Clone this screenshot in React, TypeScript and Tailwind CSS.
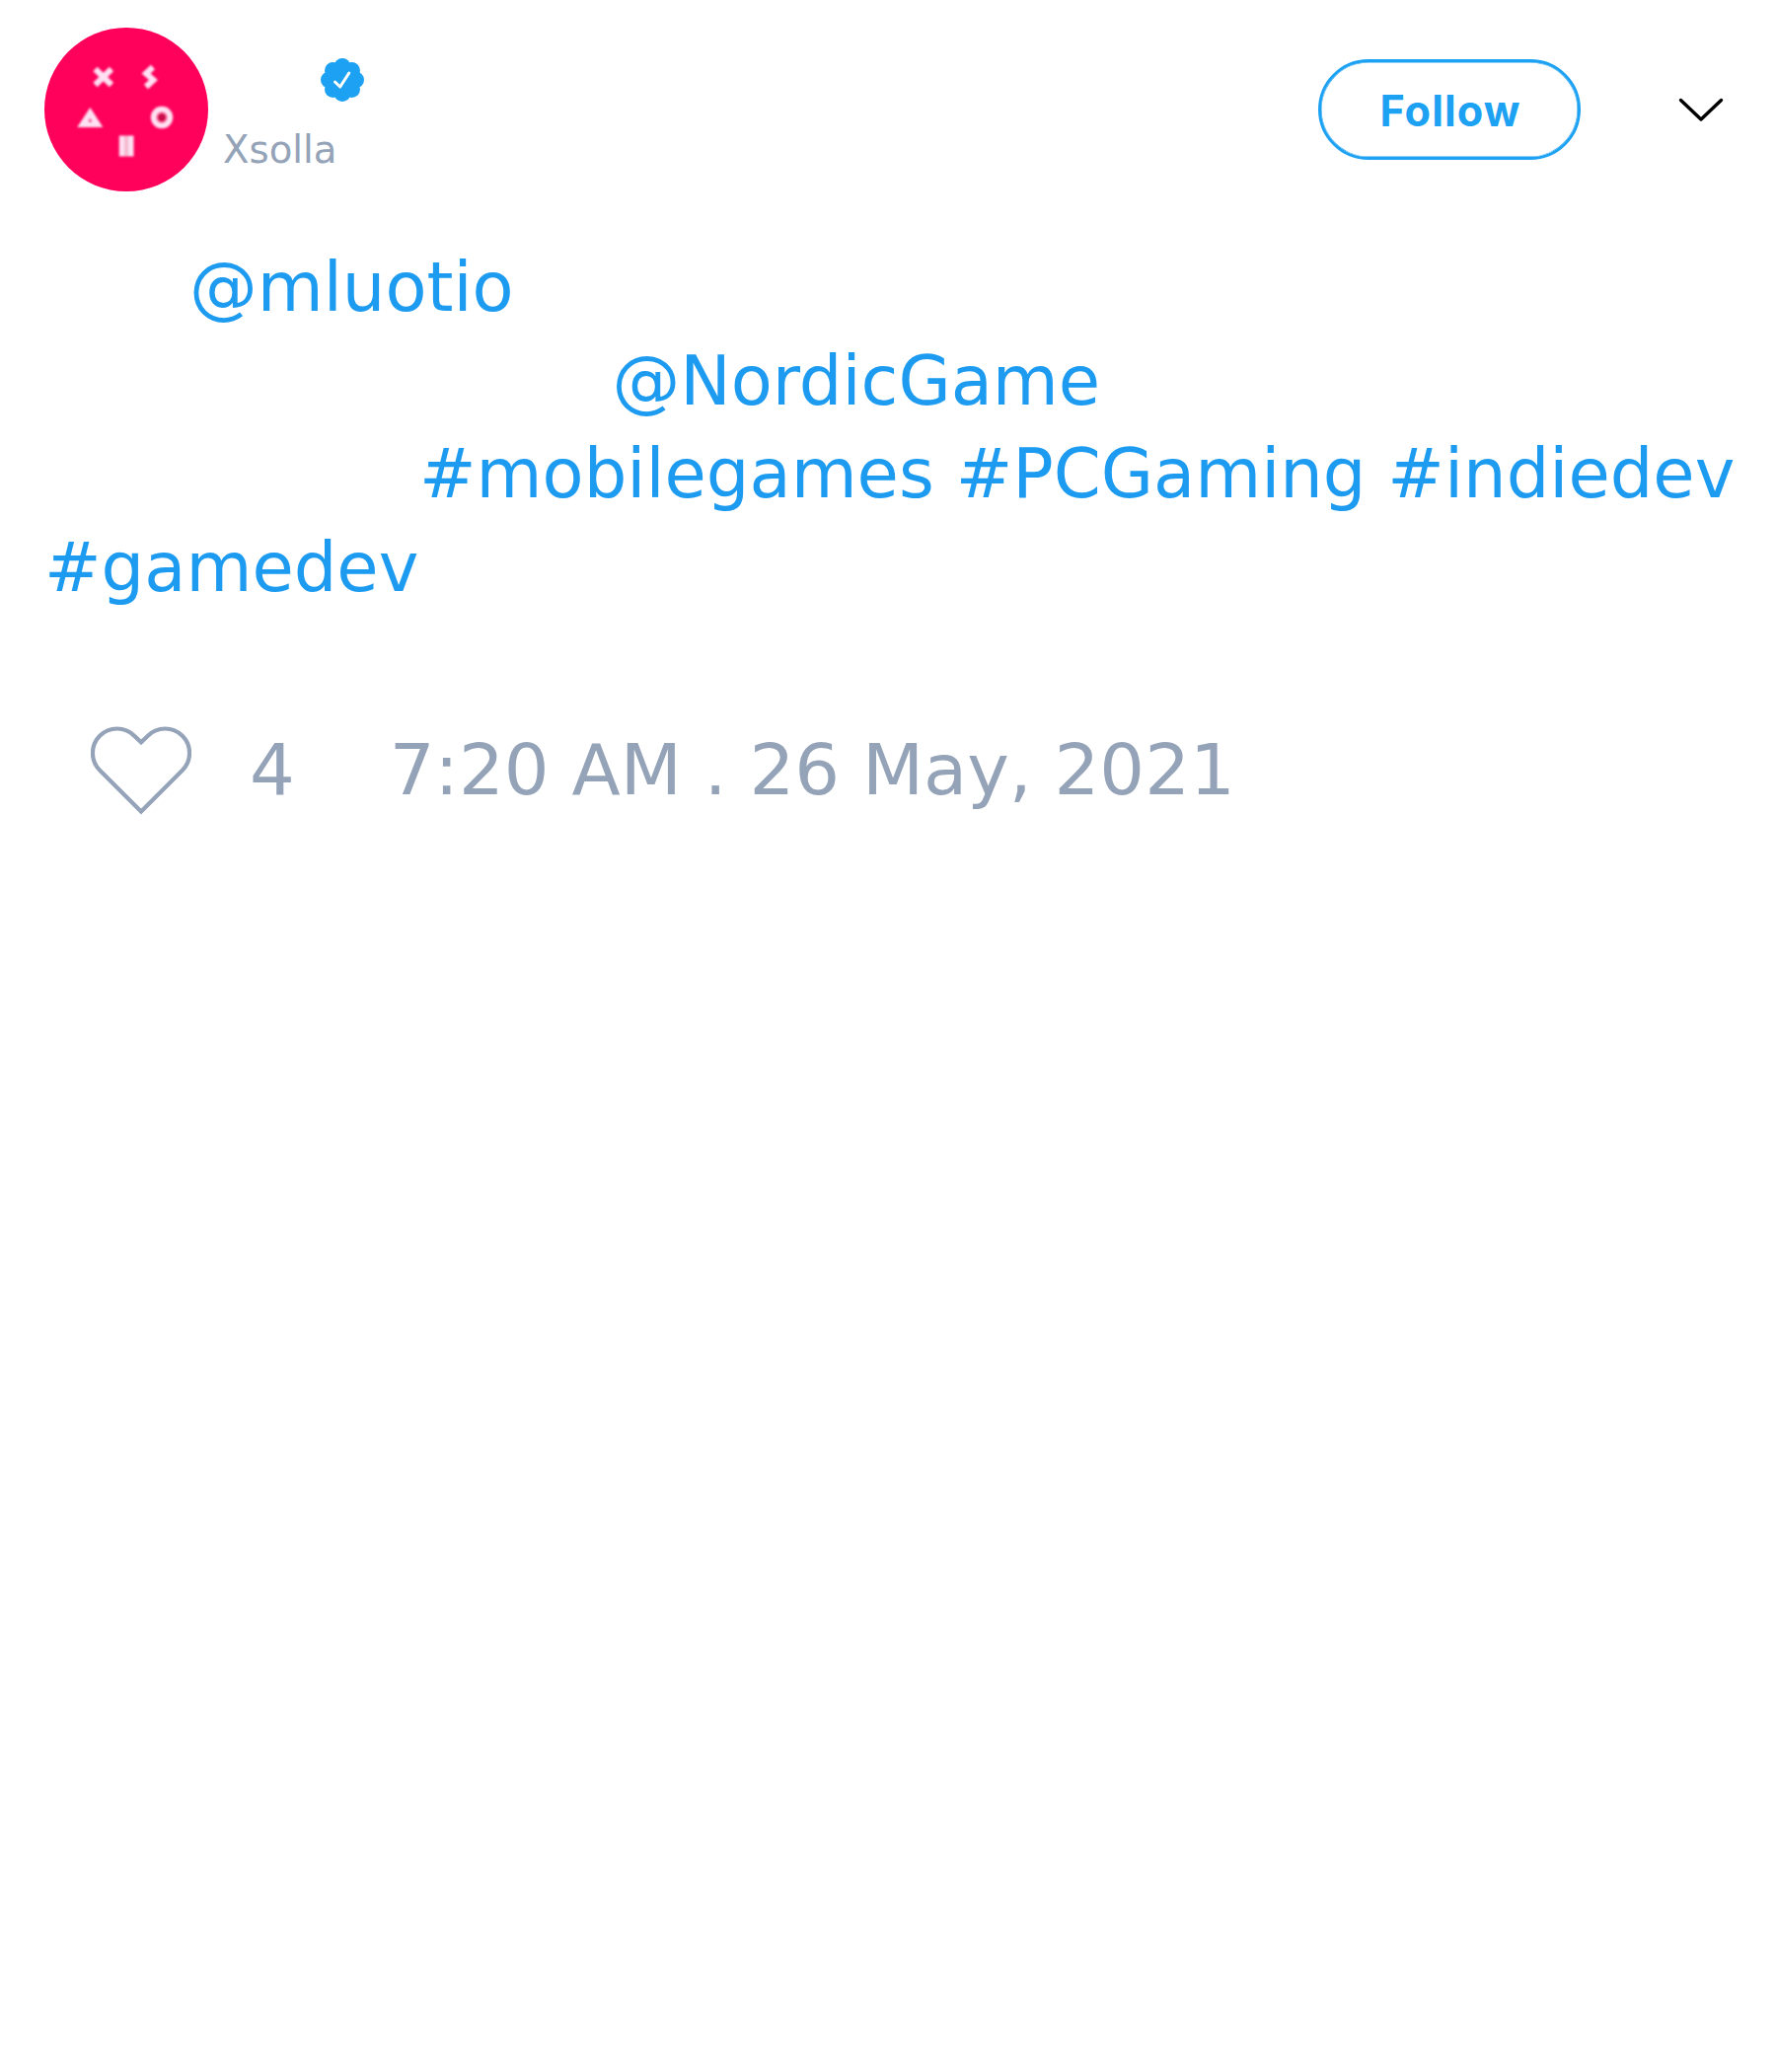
function Avatar() {
  return (
    <svg viewBox="0 0 166 166" className="size-[166px] shrink-0 rounded-full bg-[#ff005b]" fill="none" stroke="#ffe0f2">
      <defs>
        <filter id="soft" x="-20%" y="-20%" width="140%" height="140%">
          <feGaussianBlur stdDeviation="0.9" />
        </filter>
      </defs>
      <g filter="url(#soft)" strokeWidth="6">
        <path d="M51.500 42 68 58M68 42 51.500 58" strokeWidth="6" />
        <path d="M110 40 103 46.500 110.500 53 103 60" />
        <path d="M46.300 86.500 53.800 98H38.800Z" />
        <circle cx="46.300" cy="95" r="1.200" fill="#e0407f" stroke="none" />
        <circle cx="119" cy="91" r="8.200" />
        <circle cx="119" cy="91" r="4" fill="#c8104f" stroke="none" />
        <path d="M78.800 109.500v21M87.500 109.500v21" />
        <path d="M83.200 109.500v21" strokeWidth="3.500" stroke="#f3b9cd" />
      </g>
    </svg>
  );
}

function VerifiedBadge() {
  return (
    <svg viewBox="0 0 44 44" className="size-11" fill="#1da1f2">
      <circle cx="22" cy="22" r="16" />
      <circle cx="22" cy="8.500" r="8.500" />
      <circle cx="22" cy="35.500" r="8.500" />
      <circle cx="8.500" cy="22" r="8.500" />
      <circle cx="35.500" cy="22" r="8.500" />
      <circle cx="12.500" cy="12.500" r="8.500" />
      <circle cx="31.500" cy="12.500" r="8.500" />
      <circle cx="12.500" cy="31.500" r="8.500" />
      <circle cx="31.500" cy="31.500" r="8.500" />
      <path d="m14.500 24 5.200 5L28.800 15" fill="none" stroke="#fff" strokeWidth="3" strokeLinecap="round" strokeLinejoin="round" />
    </svg>
  );
}

export default function App() {
  return (
    <main className="min-h-[2100px] w-[1800px] overflow-hidden bg-white font-['DejaVu_Sans',sans-serif]">
      <header className="flex h-[194px] items-start pt-7 pl-[45px]">
        <Avatar />
        <div className="ml-[15px] flex flex-col pt-[31px]">
          <div className="ml-[99px]">
            <VerifiedBadge />
          </div>
          <span className="mt-[25px] text-[38.700px] leading-[48px] text-[#94a3b8]">Xsolla</span>
        </div>
        <button className="mt-8 mr-[97px] ml-auto h-[102px] w-[266px] rounded-full border-3 border-[#1da1f2] pt-[3px] pl-[2px] font-['Inter',sans-serif] text-[43.200px] leading-none font-bold tracking-[1.100px] text-[#1da1f2] shadow-[inset_0_0_0_0.500px_#1da1f2]">
          Follow
        </button>
        <svg viewBox="0 0 50 30" className="mt-[68px] mr-[51px] h-[30px] w-[50px]" fill="none" stroke="#000" strokeWidth="3.400" strokeLinecap="round" strokeLinejoin="round">
          <path d="M4.500 5.500 25 25 45.500 5.500" />
        </svg>
      </header>

      <section className="mt-[50px] flex flex-col pl-[45px] text-[68.780px] leading-[94.700px] whitespace-nowrap text-[#1d9bf0]">
        <a className="ml-[147px]">@mluotio</a>
        <a className="ml-[575.500px]">@NordicGame</a>
        <div className="ml-[380px]">
          <a>#mobilegames</a> <a>#PCGaming</a> <a>#indiedev</a>
        </div>
        <a>#gamedev</a>
      </section>

      <footer className="mt-[107px] flex items-center pl-[92px] text-[72px] leading-[100px] whitespace-nowrap text-[#94a3b8]">
        <svg viewBox="0 0 102 92" className="h-[92px] w-[102px]" fill="none" stroke="currentColor" strokeWidth="4.200">
          <path d="M51 88.500 9.200 46.700A24.700 24.700 0 0 1 44.100 11.700L51 18.300 57.900 11.700A24.700 24.700 0 0 1 92.800 46.700Z" />
        </svg>
        <span className="ml-[59px]">4</span>
        <span className="ml-[96px]">7:20 AM . 26 May, 2021</span>
      </footer>
    </main>
  );
}
